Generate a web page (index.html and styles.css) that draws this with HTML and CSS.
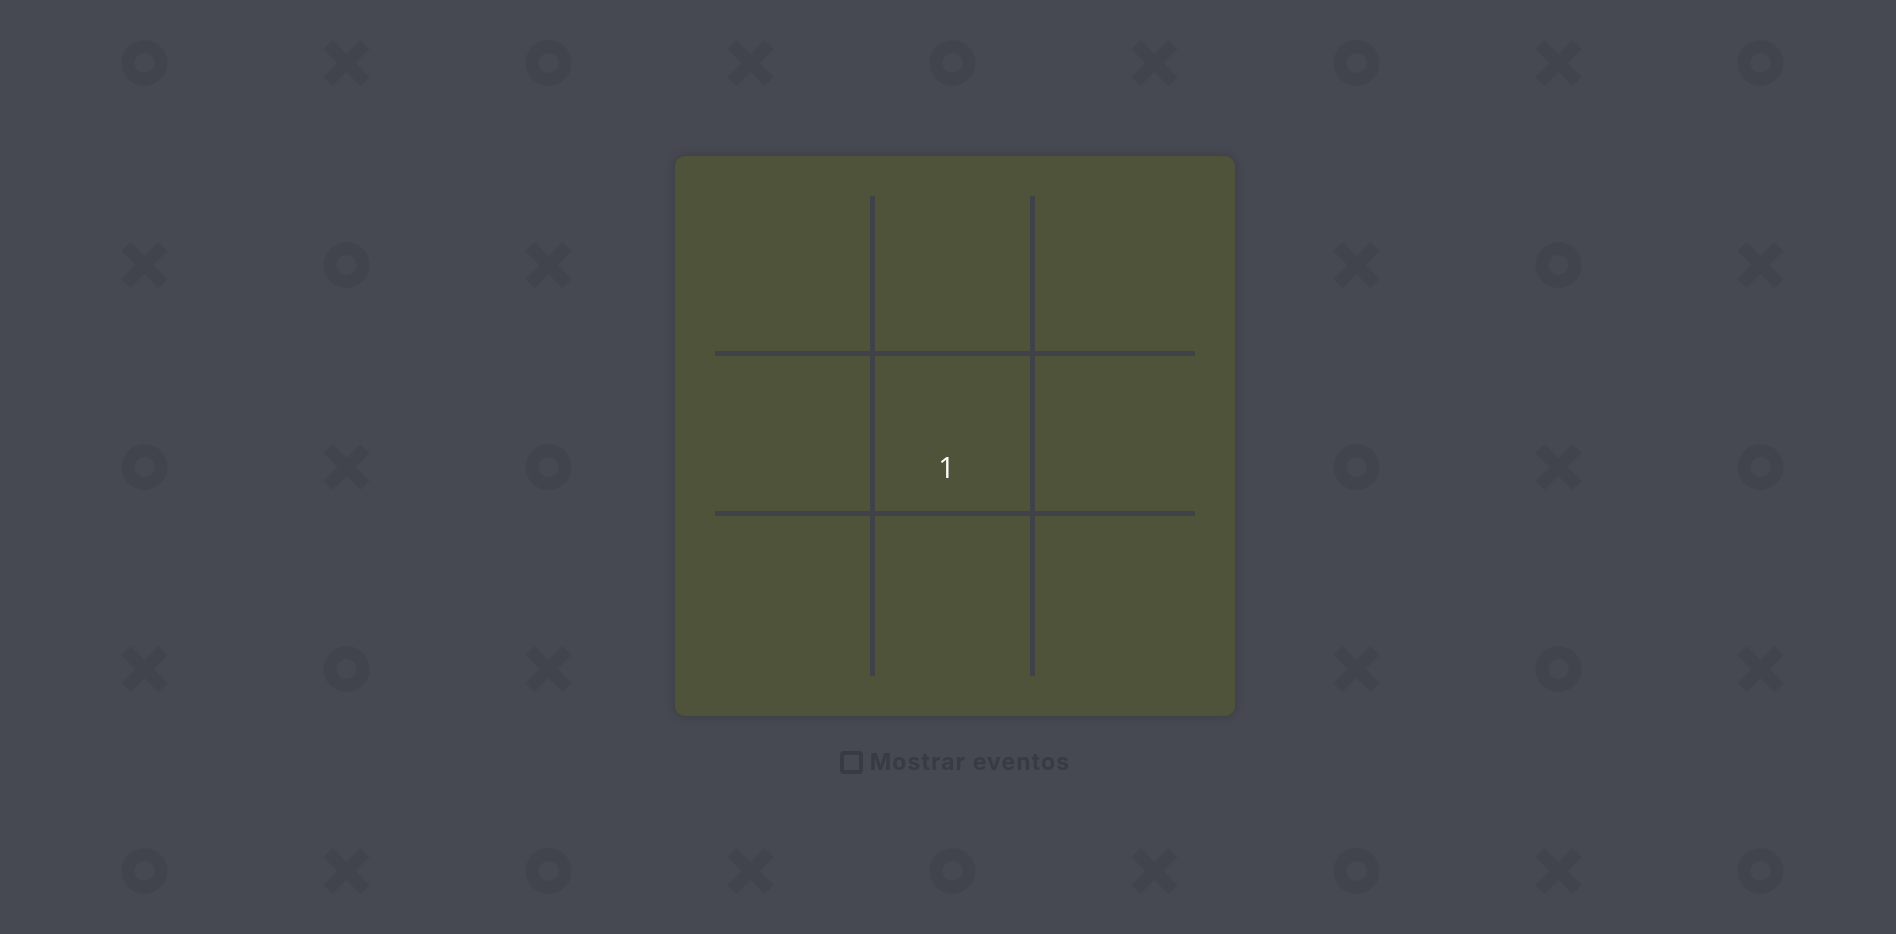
FILE: index.html
```html
<!DOCTYPE html>
<html lang="es">
<head>
<meta charset="utf-8">
<title>Tres en raya</title>
<link rel="stylesheet" href="styles.css">
</head>
<body>
<svg class="backdrop" width="100%" height="100%" aria-hidden="true">
  <defs>
    <pattern id="xo" patternUnits="userSpaceOnUse" x="43.5" y="-38" width="404" height="404">
      <circle cx="101" cy="101" r="16.5" fill="none" stroke="#41444c" stroke-width="13"/>
      <circle cx="303" cy="303" r="16.5" fill="none" stroke="#41444c" stroke-width="13"/>
      <g stroke="#41444c" stroke-width="13" stroke-linecap="butt">
        <line x1="284.5" y1="82.5" x2="321.5" y2="119.5"/>
        <line x1="321.5" y1="82.5" x2="284.5" y2="119.5"/>
        <line x1="82.5" y1="284.5" x2="119.5" y2="321.5"/>
        <line x1="119.5" y1="284.5" x2="82.5" y2="321.5"/>
      </g>
    </pattern>
  </defs>
  <rect width="100%" height="100%" fill="url(#xo)"/>
</svg>
<main class="page">
  <section class="board">
    <div class="grid">
      <div class="cell c-r c-b"></div>
      <div class="cell c-r c-b"></div>
      <div class="cell c-b"></div>
      <div class="cell c-r c-b"></div>
      <div class="cell c-r c-b cell-center"><span class="turn">1</span></div>
      <div class="cell c-b"></div>
      <div class="cell c-r"></div>
      <div class="cell c-r"></div>
      <div class="cell"></div>
    </div>
  </section>
  <label class="toggle">
    <input type="checkbox" class="toggle-box">
    <span class="toggle-text">Mostrar eventos</span>
  </label>
</main>
</body>
</html>
```
FILE: styles.css
```css
html, body {
  margin: 0;
  padding: 0;
  height: 100%;
  background: #464952;
  overflow: hidden;
}

.backdrop {
  position: fixed;
  inset: 0;
  z-index: 0;
  display: block;
}

.page {
  position: relative;
  z-index: 1;
  display: flex;
  flex-direction: column;
  align-items: center;
  padding-top: 156px;
  padding-left: 14px;
  box-sizing: border-box;
  min-height: 100vh;
}

.board {
  width: 560px;
  height: 560px;
  box-sizing: border-box;
  padding: 40px;
  background: #4f5339;
  border-radius: 10px;
  box-shadow: 0 0 8px 2px rgba(0, 0, 0, 0.12);
}

.grid {
  display: grid;
  grid-template-columns: repeat(3, 160px);
  grid-template-rows: repeat(3, 160px);
}

.cell {
  box-sizing: border-box;
}

.c-r {
  border-right: 5px solid #40424a;
}

.c-b {
  border-bottom: 5px solid #40424a;
}

.cell-center {
  display: flex;
  justify-content: center;
  align-items: flex-start;
  padding-top: 91px;
  padding-right: 12px;
}

.turn {
  font-family: "Open Sans", "Noto Sans", sans-serif;
  font-size: 29px;
  line-height: 40px;
  color: #ffffff;
}

.toggle {
  display: flex;
  align-items: center;
  gap: 7px;
  margin-top: 32px;
  cursor: pointer;
}

.toggle-box {
  appearance: none;
  -webkit-appearance: none;
  margin: 0;
  width: 23px;
  height: 23px;
  box-sizing: border-box;
  border: 4px solid #393b43;
  border-radius: 4px;
  background: transparent;
}

.toggle-text {
  font-family: Inter, "Noto Sans", sans-serif;
  font-weight: 700;
  font-size: 23px;
  letter-spacing: 1.1px;
  line-height: 28px;
  color: #393b43;
}
```
